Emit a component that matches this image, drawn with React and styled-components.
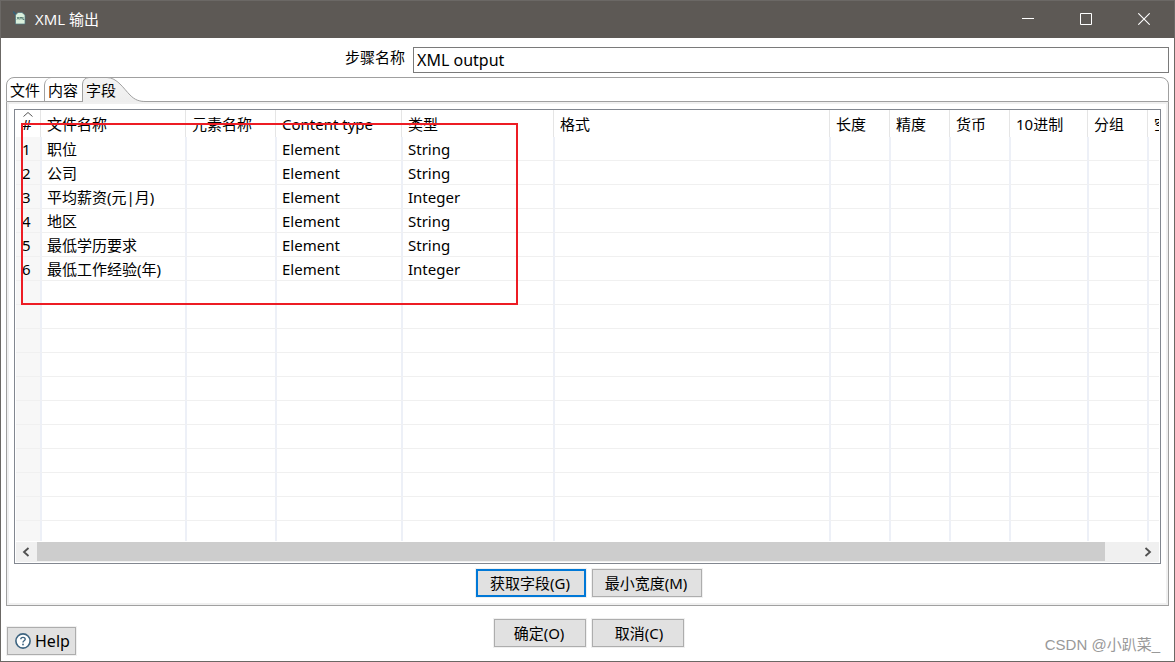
import React, {useState} from 'react';
import styled, {createGlobalStyle} from 'styled-components';

const COLUMNS = [
	{label: '#', width: 25},
	{label: '文件名称', width: 145},
	{label: '元素名称', width: 90},
	{label: 'Content type', width: 126},
	{label: '类型', width: 152},
	{label: '格式', width: 276},
	{label: '长度', width: 60},
	{label: '精度', width: 60},
	{label: '货币', width: 60},
	{label: '10进制', width: 78},
	{label: '分组', width: 60},
	{label: '空', width: 60}
];

const FIELDS = [
	{name: '职位', type: 'String'},
	{name: '公司', type: 'String'},
	{name: '平均薪资(元|月)', type: 'Integer'},
	{name: '地区', type: 'String'},
	{name: '最低学历要求', type: 'String'},
	{name: '最低工作经验(年)', type: 'Integer'}
];

const ROW_COUNT = 17;

const TABS = ['文件', '内容', '字段'];

const toCells = (field, index) => (
	field ? [index + 1, field.name, '', 'Element', field.type] : []
);

const App = () => {
	const [stepName, setStepName] = useState('XML output');
	
	return (
		<Window>
			<GlobalStyle/>
			
			<TitleBar>
				<XmlIcon/>
				<Title>XML 输出</Title>
				<WindowButton aria-label="最小化">
					<svg width="12" height="12"><path d="M0 5.5H12" stroke="#fff"/></svg>
				</WindowButton>
				<WindowButton aria-label="最大化">
					<svg width="12" height="12"><path d="M.5 .5H11.5V11.5H.5Z" stroke="#fff" fill="none"/></svg>
				</WindowButton>
				<WindowButton aria-label="关闭">
					<svg width="12" height="12"><path d="M.3 .3L11.7 11.7M11.7 .3L.3 11.7" stroke="#fff" strokeWidth="1.1"/></svg>
				</WindowButton>
			</TitleBar>
			
			<Content>
				<StepRow>
					<StepLabel htmlFor="step">步骤名称</StepLabel>
					<StepInput id="step" value={stepName} onChange={e => setStepName(e.target.value)}/>
				</StepRow>
				
				<TabStrip role="tablist">
					{
						TABS.map((tab, i) => (
							<Tab key={tab} role="tab" aria-selected={i === 2} $first={i === 0} $active={i === 2}>
								{i === 2 && <TabShape/>}
								<TabText>{tab}</TabText>
							</Tab>
						))
					}
				</TabStrip>
				
				<Panel>
					<TableBox>
						<TableView>
							<Table>
								<colgroup>
									{COLUMNS.map(({label, width}) => <col key={label} width={width}/>)}
								</colgroup>
								<thead>
									<tr>
										{
											COLUMNS.map(({label}, i) => (
												<HeadCell key={label}>
													{i === 0 && <SortMark width="10" height="5"><path d="M.5 4.5L5 .5L9.5 4.5" stroke="#555" fill="none"/></SortMark>}
													{label}
												</HeadCell>
											))
										}
									</tr>
								</thead>
								<tbody>
									{
										Array.from({length: ROW_COUNT}, (_, row) => {
											const cells = toCells(FIELDS[row], row);
											return (
												<tr key={row}>
													{COLUMNS.map(({label}, i) => <Cell key={label} $narrow={i === 0}>{cells[i]}</Cell>)}
												</tr>
											);
										})
									}
								</tbody>
							</Table>
						</TableView>
						<ScrollBar>
							<ScrollButton aria-label="向左滚动">
								<svg width="8" height="10"><path d="M6.5 1L2 5L6.5 9" stroke="#505050" strokeWidth="1.8" fill="none"/></svg>
							</ScrollButton>
							<ScrollTrack><ScrollThumb/></ScrollTrack>
							<ScrollButton aria-label="向右滚动">
								<svg width="8" height="10"><path d="M1.5 1L6 5L1.5 9" stroke="#505050" strokeWidth="1.8" fill="none"/></svg>
							</ScrollButton>
						</ScrollBar>
						<Highlight/>
					</TableBox>
					<Buttons>
						<Button $width={110} $primary>获取字段(G)</Button>
						<Button $width={110}>最小宽度(M)</Button>
					</Buttons>
				</Panel>
				
				<Footer>
					<HelpButton>
						<HelpIcon/>
						Help
					</HelpButton>
					<Buttons>
						<Button $width={92}>确定(O)</Button>
						<Button $width={92}>&nbsp;取消(C)</Button>
					</Buttons>
				</Footer>
			</Content>
			
			<Watermark>CSDN @小趴菜_</Watermark>
		</Window>
	);
};

export default App;

const XmlIcon = () => (
	<svg width="13" height="15" viewBox="0 0 13 15">
		<path d="M0 .5L3 4" stroke="#33627a" strokeWidth="1.6"/>
		<path d="M5 1.5H9L12 4V13H2.5V4Z" fill="#daf0dc" stroke="#4c7280" strokeWidth=".7"/>
		<path d="M4 6L6 8.5M6 6L4 8.5M7 8.5V6L8 7.2L9 6V8.5M10 6V8.5H11.3" stroke="#3f6a62" strokeWidth=".8" fill="none"/>
	</svg>
);

const TabShape = () => (
	<Shape width="64" height="25">
		<defs>
			<linearGradient id="tabFill" x1="0" y1="0" x2="0" y2="1">
				<stop offset="0" stopColor="#f4f4f4"/>
				<stop offset="1" stopColor="#eeeeee"/>
			</linearGradient>
		</defs>
		<path
			d="M.5 25V7Q1 1 7 .5H25C35 .5 42 12 48 18C53 23 57 24.5 64 24.5V25Z"
			fill="url(#tabFill)"
		/>
		<path
			d="M.5 25V7Q1 1 7 .5H25C35 .5 42 12 48 18C53 23 57 24.5 64 24.5"
			fill="none"
			stroke="#a0a0a0"
		/>
	</Shape>
);

const HelpIcon = () => (
	<svg width="16" height="16" viewBox="0 0 16 16">
		<circle cx="8" cy="8" r="7.1" fill="#fff" stroke="#3d6480" strokeWidth="1.6"/>
		<path d="M5.8 6.3C5.8 3.7 10.2 3.7 10.2 6.3C10.2 7.8 8 7.8 8 9.4" fill="none" stroke="#3d6480" strokeWidth="1.4"/>
		<circle cx="8" cy="11.5" r=".9" fill="#3d6480"/>
	</svg>
);

const GlobalStyle = createGlobalStyle`
  body {
    margin: 0;
    font-family: "Noto Sans", "Noto Sans CJK SC", sans-serif;
    font-size: 15px;
    color: #000;
  }

  * {
    box-sizing: border-box;
  }

  button, input {
    font: inherit;
    color: inherit;
  }
`;

const Window = styled.div`
  position: relative;
  height: 100vh;
  display: flex;
  flex-direction: column;
  border: 1px solid #6b6865;
  background: #fff;
`;

const TitleBar = styled.header`
  height: 37px;
  flex: none;
  display: flex;
  align-items: center;
  padding: 0 1px 2px 12px;
  background: #5d5955;
  color: #fff;
`;

const Title = styled.div`
  flex: 1;
  margin-left: 9px;
  font-family: "Open Sans", "Noto Sans CJK SC", sans-serif;
`;

const WindowButton = styled.button`
  width: 58px;
  height: 34px;
  display: flex;
  align-items: center;
  justify-content: center;
  padding: 0;
  border: none;
  background: none;
`;

const Content = styled.main`
  flex: 1;
  min-height: 0;
  display: flex;
  flex-direction: column;
  padding: 9px 5px 6px;
`;

const StepRow = styled.div`
  display: grid;
  grid-template-columns: 35% 1fr;
`;

const StepLabel = styled.label`
  padding-right: 8px;
  line-height: 20px;
  text-align: right;
`;

const StepInput = styled.input`
  height: 26px;
  min-width: 0;
  padding: 0 3px;
  border: 1px solid #7a7a7a;
  background: #fff;
  font-size: 16px;
  outline: none;
`;

const TabStrip = styled.div`
  height: 25px;
  flex: none;
  display: flex;
  margin-top: 4px;
  border: 1px solid #a0a0a0;
  border-radius: 8px 8px 0 0;
`;

const Tab = styled.button`
  position: relative;
  width: ${({$first}) => $first ? 37 : 38}px;
  height: 23px;
  padding: 0 0 0 ${({$active}) => $active ? 4 : 3}px;
  border: none;
  border-left: ${({$first, $active}) => $first || $active ? 'none' : '1px solid #a0a0a0'};
  border-top-left-radius: 7px;
  background: none;
  line-height: 24px;
  text-align: left;
  white-space: nowrap;
`;

const Shape = styled.svg`
  position: absolute;
  top: -1px;
  left: 0;
`;

const TabText = styled.span`
  position: relative;
`;

const Panel = styled.section`
  flex: 1;
  min-height: 0;
  display: flex;
  flex-direction: column;
  gap: 5px;
  padding: 7px 7px 8px;
  border: 1px solid #a0a0a0;
  border-top: none;
  box-shadow: inset 0 0 0 2px #f0f0f0;
`;

const TableBox = styled.div`
  position: relative;
  flex: 1;
  min-height: 0;
  display: flex;
  flex-direction: column;
  padding: 0 1px 1px;
  border: 1px solid #828790;
`;

const TableView = styled.div`
  flex: 1;
  min-height: 0;
  overflow: hidden;
`;

const Table = styled.table`
  width: 1192px;
  table-layout: fixed;
  border-collapse: separate;
  border-spacing: 0;
`;

const HeadCell = styled.th`
  position: relative;
  height: 27px;
  padding: 0 0 0 6px;
  border-right: 1px solid #e5e5e5;
  line-height: 24px;
  font-weight: normal;
  text-align: left;
  white-space: nowrap;
`;

const SortMark = styled.svg`
  position: absolute;
  top: 2px;
  left: 7px;
`;

const Cell = styled.td`
  height: 24px;
  padding: 1px 0 0 ${({$narrow}) => $narrow ? 6 : 5}px;
  border-left: ${({$narrow}) => $narrow ? 'none' : '1px solid #edf0f7'};
  border-right: 1px solid #edf0f7;
  border-bottom: 1px solid #f0f0f0;
  background: ${({$narrow}) => $narrow ? '#f7f7f7' : '#fff'};
  line-height: 22px;
  white-space: nowrap;
`;

const ScrollBar = styled.div`
  height: 20px;
  flex: none;
  display: flex;
  margin-top: 1px;
  background: #f0f0f0;
`;

const ScrollButton = styled.button`
  width: 21px;
  display: flex;
  align-items: center;
  justify-content: center;
  padding: 0 2px 0 0;
  border: none;
  background: none;
`;

const ScrollTrack = styled.div`
  flex: 1;
`;

const ScrollThumb = styled.div`
  width: 97%;
  height: 19px;
  background: #cdcdcd;
`;

// marks the filled rows, drawn over the table
const Highlight = styled.div`
  position: absolute;
  top: 13px;
  left: 6px;
  width: 497px;
  height: 182px;
  border: 2px solid #ed1c24;
  pointer-events: none;
`;

const Buttons = styled.div`
  display: flex;
  justify-content: center;
  gap: 6px;
  padding-left: 3px;
`;

const Button = styled.button`
  width: ${({$width}) => $width}px;
  height: 28px;
  padding: 0 2px 0 0;
  border: ${({$primary}) => $primary ? '2px solid #0078d7' : '1px solid #adadad'};
  box-shadow: 0 0 0 1px #f0f0f0;
  background: #e1e1e1;
  line-height: 24px;
`;

const Footer = styled.footer`
  height: 49px;
  flex: none;
  display: grid;
  grid-template-columns: 1fr auto 1fr;
  align-items: start;
  padding: 13px 1px 0;
`;

const HelpButton = styled.button`
  width: 69px;
  height: 28px;
  display: flex;
  align-items: center;
  align-self: end;
  gap: 4px;
  padding: 0 0 0 7px;
  border: 1px solid #adadad;
  box-shadow: 0 0 0 1px #f0f0f0;
  background: #e1e1e1;
  font-size: 16px;
`;

const Watermark = styled.div`
  position: absolute;
  right: 14px;
  bottom: 5px;
  color: #999;
  font-family: "Liberation Sans", "Noto Sans CJK SC", sans-serif;
  font-size: 15px;
  line-height: 22px;
`;
